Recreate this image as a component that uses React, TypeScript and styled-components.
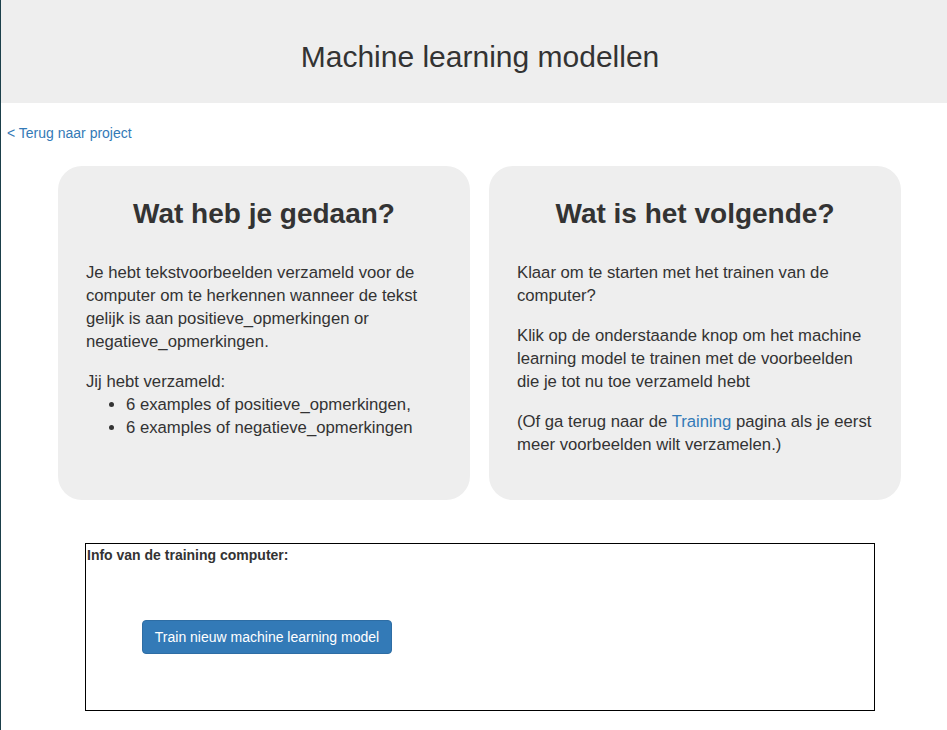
import React from "react";
import styled, { createGlobalStyle } from "styled-components";

const Global = createGlobalStyle`
  html, body { margin: 0; padding: 0; background: #fff; }
  body {
    font-family: "Liberation Sans", Arial, sans-serif;
    color: #333;
    border-left: 1px solid #1b3f4a;
    min-height: 730px;
    box-sizing: border-box;
  }
`;

const Header = styled.header`
  background: #eee;
  height: 103px;
  display: flex;
  align-items: center;
  justify-content: center;
  padding-left: 12px;
`;

const Title = styled.h1`
  margin: 0;
  font-size: 30px;
  font-weight: 400;
  line-height: 33px;
  color: #333;
  padding-top: 10px;
`;

const BackLink = styled.a`
  display: block;
  margin: 20px 0 0 6px;
  font-size: 14px;
  line-height: 20px;
  color: #337ab7;
  text-decoration: none;
`;

const Cards = styled.div`
  display: grid;
  grid-template-columns: 412px 412px;
  gap: 19px;
  margin: 23px 0 0 57px;
`;

const Card = styled.section`
  background: #eee;
  border-radius: 24px;
  height: 334px;
  box-sizing: border-box;
  padding: 31px 28px 0 28px;
`;

const CardTitle = styled.h2`
  margin: 0 0 30px;
  text-align: center;
  font-size: 28px;
  font-weight: 700;
  line-height: 34px;
  color: #333;
`;

const Para = styled.p`
  margin: 0 0 17px;
  font-size: 16.7px;
  line-height: 23px;
`;

const ParaTight = styled(Para)`
  margin: 0;
`;

const List = styled.ul`
  margin: 0;
  padding-left: 40px;
  font-size: 16.7px;
  line-height: 23px;
`;

const InlineLink = styled.a`
  color: #337ab7;
  text-decoration: none;
`;

const InfoBox = styled.div`
  margin: 43px 0 0 84px;
  width: 790px;
  height: 168px;
  box-sizing: border-box;
  border: 1px solid #000;
  padding: 1px 0 0 1px;
`;

const InfoLabel = styled.div`
  font-size: 14px;
  font-weight: 700;
  line-height: 20px;
  color: #333;
`;

const TrainButton = styled.button`
  display: block;
  margin: 55px 0 0 55px;
  width: 250px;
  height: 34px;
  box-sizing: border-box;
  background: #337ab7;
  border: 1px solid #2e6da4;
  border-radius: 4px;
  color: #fff;
  font-family: "Liberation Sans", Arial, sans-serif;
  font-size: 14px;
  line-height: 20px;
  padding: 6px 0;
  white-space: nowrap;
  text-align: center;
  cursor: pointer;
`;

export default function App() {
  return (
    <>
      <Global />
      <Header>
        <Title>Machine learning modellen</Title>
      </Header>
      <BackLink href="#">&lt; Terug naar project</BackLink>
      <Cards>
        <Card>
          <CardTitle>Wat heb je gedaan?</CardTitle>
          <Para>
            Je hebt tekstvoorbeelden verzameld voor de computer om te herkennen
            wanneer de tekst gelijk is aan positieve_opmerkingen or
            negatieve_opmerkingen.
          </Para>
          <ParaTight>Jij hebt verzameld:</ParaTight>
          <List>
            <li>6 examples of positieve_opmerkingen,</li>
            <li>6 examples of negatieve_opmerkingen</li>
          </List>
        </Card>
        <Card>
          <CardTitle>Wat is het volgende?</CardTitle>
          <Para>Klaar om te starten met het trainen van de computer?</Para>
          <Para>
            Klik op de onderstaande knop om het machine learning model te
            trainen met de voorbeelden die je tot nu toe verzameld hebt
          </Para>
          <Para>
            (Of ga terug naar de <InlineLink href="#">Training</InlineLink>{" "}
            pagina als je eerst meer voorbeelden wilt verzamelen.)
          </Para>
        </Card>
      </Cards>
      <InfoBox>
        <InfoLabel>Info van de training computer:</InfoLabel>
        <TrainButton>Train nieuw machine learning model</TrainButton>
      </InfoBox>
    </>
  );
}
